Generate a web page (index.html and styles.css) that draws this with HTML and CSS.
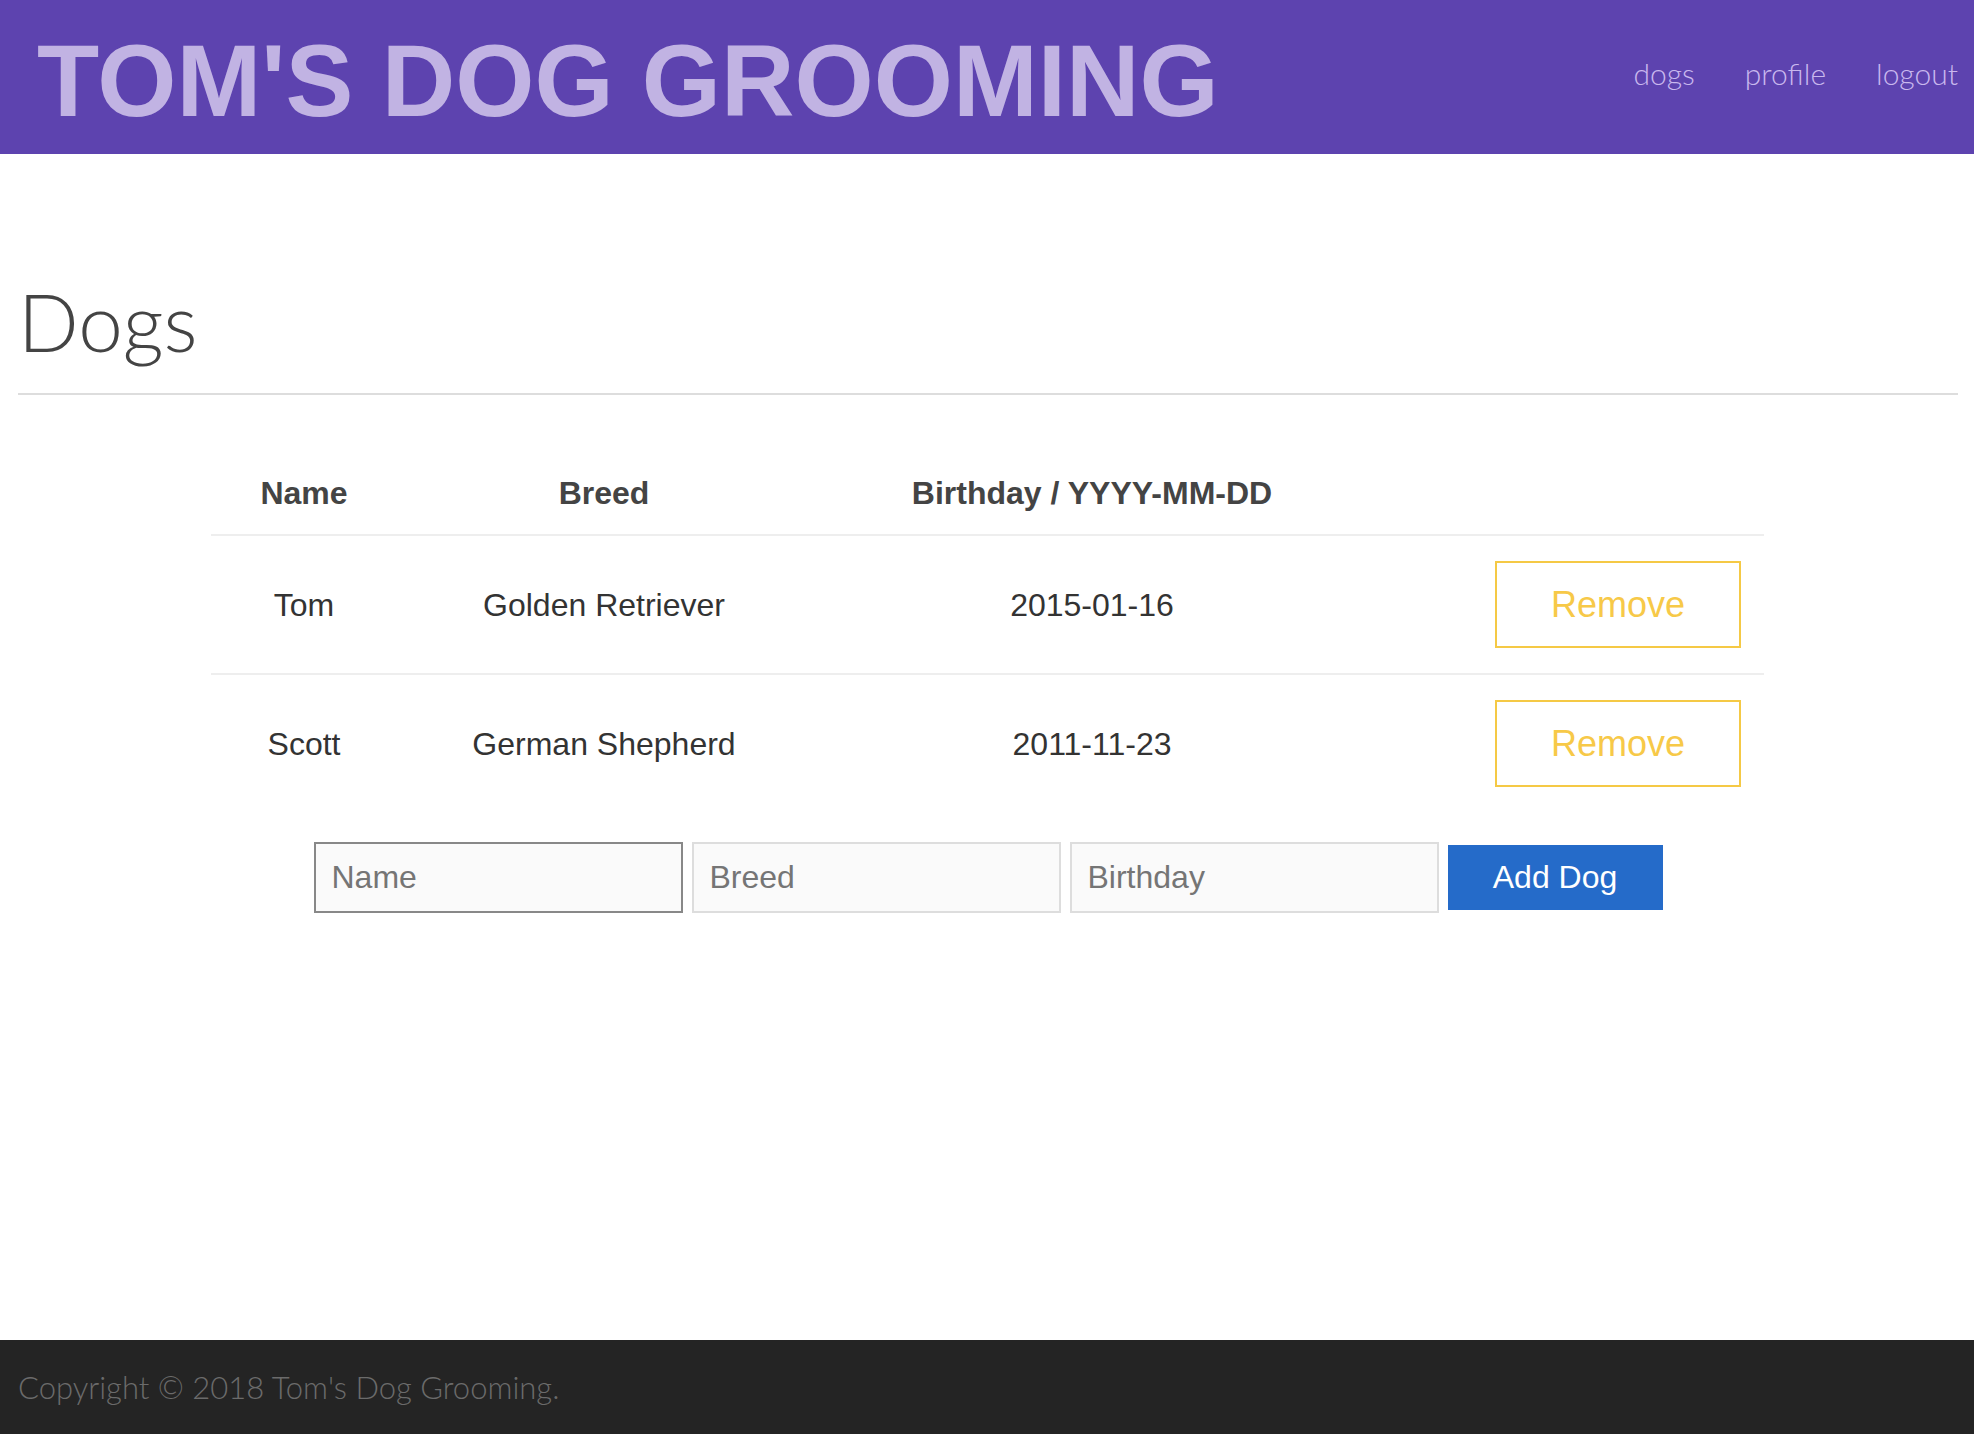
FILE: index.html
```html
<!DOCTYPE html>
<html lang="en">
<head>
<meta charset="utf-8">
<title>Tom's Dog Grooming - Dogs</title>
<link rel="stylesheet" href="styles.css">
</head>
<body>
<header class="site-header">
  <div class="brand">TOM'S DOG GROOMING</div>
  <nav class="nav">
    <a href="#" class="nav-link">dogs</a>
    <a href="#" class="nav-link">profile</a>
    <a href="#" class="nav-link">logout</a>
  </nav>
</header>

<main class="main">
  <h1 class="page-title">Dogs</h1>
  <hr class="divider">

  <table class="dogs-table">
    <thead>
      <tr>
        <th class="col-name">Name</th>
        <th class="col-breed">Breed</th>
        <th class="col-bday">Birthday / YYYY-MM-DD</th>
        <th class="col-action"></th>
      </tr>
    </thead>
    <tbody>
      <tr>
        <td>Tom</td>
        <td>Golden Retriever</td>
        <td>2015-01-16</td>
        <td class="action"><button class="btn-remove">Remove</button></td>
      </tr>
      <tr>
        <td>Scott</td>
        <td>German Shepherd</td>
        <td>2011-11-23</td>
        <td class="action"><button class="btn-remove">Remove</button></td>
      </tr>
    </tbody>
  </table>

  <form class="add-form">
    <input class="field field-focus" type="text" placeholder="Name">
    <input class="field" type="text" placeholder="Breed">
    <input class="field" type="text" placeholder="Birthday">
    <button type="button" class="btn-add">Add Dog</button>
  </form>
</main>

<footer class="site-footer">
  <span>Copyright © 2018 Tom's Dog Grooming.</span>
</footer>
</body>
</html>
```

FILE: styles.css
```css
html, body {
  margin: 0;
  padding: 0;
}

body {
  min-height: 100vh;
  display: flex;
  flex-direction: column;
  font-family: "Liberation Sans", Arial, sans-serif;
  background: #ffffff;
  color: #333333;
}

.site-header {
  height: 154px;
  background: #5d43af;
  display: flex;
  align-items: flex-start;
  justify-content: space-between;
  padding: 0 16px 0 37px;
  box-sizing: border-box;
}

.brand {
  margin-top: 30px;
  font-family: "Liberation Sans", Arial, sans-serif;
  font-weight: 700;
  font-size: 101.8px;
  line-height: 102px;
  color: #c1b3e3;
  white-space: nowrap;
}

.nav {
  display: flex;
  gap: 50px;
  margin-top: 53px;
}

.nav-link {
  font-family: Lato, "Open Sans", sans-serif;
  font-weight: 300;
  font-size: 30px;
  line-height: 40px;
  color: #c9b8ee;
  text-decoration: none;
}

.main {
  flex: 1;
  padding: 0 16px 0 18px;
}

.page-title {
  margin: 123px 0 0 0;
  font-family: Lato, "Open Sans", sans-serif;
  font-weight: 300;
  font-size: 80px;
  line-height: 88px;
  color: #444444;
}

.divider {
  margin: 28px 0 0 0;
  border: 0;
  border-top: 2px solid #dddddd;
  height: 0;
}

.dogs-table {
  margin: 61px 0 0 193px;
  width: 1553px;
  border-collapse: collapse;
  table-layout: fixed;
}

.col-name { width: 170px; }
.col-breed { width: 398px; }
.col-bday { width: 546px; }

.dogs-table th {
  font-weight: 700;
  font-size: 32px;
  line-height: 46px;
  padding: 14px 8px 18px;
  color: #444444;
  text-align: center;
  border-bottom: 2px solid #eeeeee;
}

.dogs-table td {
  font-size: 32px;
  line-height: 46px;
  padding: 25px 8px;
  color: #333333;
  text-align: center;
  vertical-align: middle;
}

.dogs-table tbody tr + tr td {
  border-top: 2px solid #eeeeee;
}

.dogs-table td.action {
  text-align: right;
  padding-right: 23px;
}

.btn-remove {
  font-family: "Liberation Sans", Arial, sans-serif;
  font-size: 36px;
  line-height: 47px;
  padding: 18px 54px;
  border: 2px solid #f5c945;
  background: #ffffff;
  color: #f7c948;
  cursor: pointer;
  vertical-align: middle;
}

.add-form {
  margin-top: 30px;
  display: flex;
  justify-content: center;
  align-items: center;
  gap: 9px;
}

.field {
  width: 369px;
  height: 71px;
  box-sizing: border-box;
  border: 2px solid #dddddd;
  background: #fafafa;
  padding: 0 16px;
  font-family: "Liberation Sans", Arial, sans-serif;
  font-size: 32px;
  color: #333333;
  outline: none;
}

.field::placeholder {
  color: #757575;
}

.field-focus {
  border-color: #888888;
}

.btn-add {
  width: 215px;
  height: 65px;
  border: 0;
  background: #256bc9;
  color: #ffffff;
  font-family: "Liberation Sans", Arial, sans-serif;
  font-size: 32px;
  cursor: pointer;
}

.site-footer {
  height: 94px;
  background: #242424;
  display: flex;
  align-items: center;
  padding-left: 18px;
  font-family: Lato, "Open Sans", sans-serif;
  font-weight: 300;
  font-size: 31px;
  color: #6b6b6b;
}
```
